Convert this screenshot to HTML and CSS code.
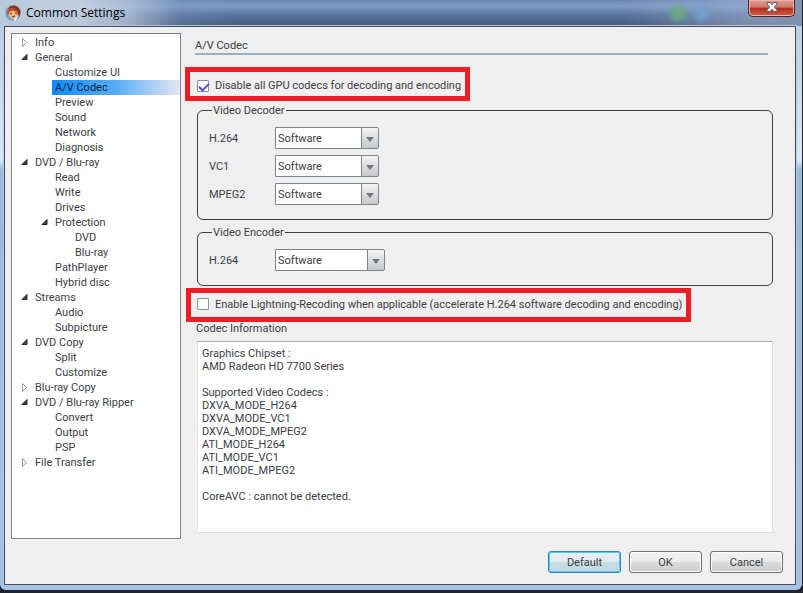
FILE: index.html
```html
<!DOCTYPE html>
<html lang="en">
<head>
<meta charset="utf-8">
<title>Common Settings</title>
<link rel="stylesheet" href="styles.css">
</head>
<body>
<svg class="defs" aria-hidden="true">
  <symbol id="open" viewBox="0 0 9 9"><path d="M7 1.500V6.500H2Z" fill="#444" stroke="#222"/></symbol>
  <symbol id="closed" viewBox="0 0 9 9"><path d="M2.500 .5V8.500L6.500 4.500Z" fill="#fff" stroke="#999"/></symbol>
</svg>
<div class="window">
  <header class="titlebar">
    <svg class="logo" viewBox="0 0 16 16" aria-hidden="true">
      <circle cx="8" cy="8" r="7.8" fill="#6f9fcb"/>
      <path d="M3 4Q5 0 10 .5Q15 2 15.500 7Q15 12 12 14Q13 8 10 5Z" fill="#8f301c"/>
      <path d="M4 5Q8 2 12 6L13 10Q11 15 7 14L3 10Z" fill="#efb583"/>
      <path d="M2 8Q2 3 7 3Q11 3 12 7L9 6Q5 5 4 8L3 11Z" fill="#b5562b"/>
      <path d="M5 8L7 9M10 8H12M7 12L10 11" stroke="#63301f" fill="none"/>
      <path d="M9 14L14 10Q13 14 9 16Z" fill="#edf3f8"/>
    </svg>
    <h1>Common Settings</h1>
    <span class="glow green"></span><span class="glow blue"></span>
    <button class="close" type="button" aria-label="Close">
      <svg viewBox="0 0 12 10" aria-hidden="true"><path d="M1 .5H4.200L6 2.700 7.800.5H11V2L8.500 5 11 8V9.500H7.800L6 7.300 4.200 9.500H1V8L3.500 5 1 2Z" fill="#f5f5f5" stroke="#55566b"/></svg>
    </button>
  </header>
  <div class="client">
    <nav class="tree" aria-label="Settings">
      <ul>
        <li><a href="#"><svg><use href="#closed"/></svg>Info</a></li>
        <li><a href="#"><svg><use href="#open"/></svg>General</a>
          <ul>
            <li><a href="#">Customize UI</a></li>
            <li><a href="#" class="selected" aria-current="page">A/V Codec</a></li>
            <li><a href="#">Preview</a></li>
            <li><a href="#">Sound</a></li>
            <li><a href="#">Network</a></li>
            <li><a href="#">Diagnosis</a></li>
          </ul></li>
        <li><a href="#"><svg><use href="#open"/></svg>DVD / Blu-ray</a>
          <ul>
            <li><a href="#">Read</a></li>
            <li><a href="#">Write</a></li>
            <li><a href="#">Drives</a></li>
            <li><a href="#"><svg><use href="#open"/></svg>Protection</a>
              <ul>
                <li><a href="#">DVD</a></li>
                <li><a href="#">Blu-ray</a></li>
              </ul></li>
            <li><a href="#">PathPlayer</a></li>
            <li><a href="#">Hybrid disc</a></li>
          </ul></li>
        <li><a href="#"><svg><use href="#open"/></svg>Streams</a>
          <ul>
            <li><a href="#">Audio</a></li>
            <li><a href="#">Subpicture</a></li>
          </ul></li>
        <li><a href="#"><svg><use href="#open"/></svg>DVD Copy</a>
          <ul>
            <li><a href="#">Split</a></li>
            <li><a href="#">Customize</a></li>
          </ul></li>
        <li><a href="#"><svg><use href="#closed"/></svg>Blu-ray Copy</a></li>
        <li><a href="#"><svg><use href="#open"/></svg>DVD / Blu-ray Ripper</a>
          <ul>
            <li><a href="#">Convert</a></li>
            <li><a href="#">Output</a></li>
            <li><a href="#">PSP</a></li>
          </ul></li>
        <li><a href="#"><svg><use href="#closed"/></svg>File Transfer</a></li>
      </ul>
    </nav>
    <main class="panel">
      <h2>A/V Codec</h2>
      <label class="check first"><input type="checkbox" checked>Disable all GPU codecs for decoding and encoding</label>
      <fieldset class="decoder">
        <legend>Video Decoder</legend>
        <div class="row"><label for="d1">H.264</label><span class="combo"><select id="d1"><option>Software</option></select></span></div>
        <div class="row"><label for="d2">VC1</label><span class="combo"><select id="d2"><option>Software</option></select></span></div>
        <div class="row"><label for="d3">MPEG2</label><span class="combo"><select id="d3"><option>Software</option></select></span></div>
      </fieldset>
      <fieldset class="encoder">
        <legend>Video Encoder</legend>
        <div class="row"><label for="e1">H.264</label><span class="combo wide"><select id="e1"><option>Software</option></select></span></div>
      </fieldset>
      <label class="check second"><input type="checkbox">Enable Lightning-Recoding when applicable (accelerate H.264 software decoding and encoding)</label>
      <label class="caption" for="info">Codec Information</label>
      <textarea id="info" readonly>Graphics Chipset :
AMD Radeon HD 7700 Series

Supported Video Codecs :
DXVA_MODE_H264
DXVA_MODE_VC1
DXVA_MODE_MPEG2
ATI_MODE_H264
ATI_MODE_VC1
ATI_MODE_MPEG2

CoreAVC : cannot be detected.</textarea>
      <div class="actions">
        <button type="button" class="default">Default</button>
        <button type="button">OK</button>
        <button type="button">Cancel</button>
      </div>
    </main>
  </div>
</div>
</body>
</html>
```
FILE: styles.css
```css
* { box-sizing: border-box; }
html { height: 100%; background: #20242f; }
body {
  margin: 0;
  height: 100%;
  padding-bottom: 3px;
  color: #3c3c46;
  font: 11px/15px Roboto, "Liberation Sans", sans-serif;
}
.defs { position: absolute; width: 0; height: 0; }
.window {
  display: flex;
  flex-direction: column;
  height: 100%;
  margin-right: 1px;
  padding: 0 6px 5px 4px;
  border-radius: 0 6px 6px 6px;
  background:
    linear-gradient(180deg, #b6c8dc, #d9e9f7 160px, #9bb9dc 170px, #a5c2e2);
}
.titlebar {
  display: flex;
  flex: none;
  align-items: center;
  height: 26px;
  margin: 0 -6px 0 -4px;
  padding: 0 7px 0 5px;
  background:
    linear-gradient(90deg, #b9c8dc 0, #ccd7e5dd 80px, #b9c8dcbb 130px, #7d9ac544 180px, #7d9ac500 240px, #7d9ac500 620px, #a3b4d088 750px, #8292ad),
    linear-gradient(180deg, #6c89b6, #7d9ac5 25%, #5a75a1 55%, #445879);
}
.logo { width: 16px; height: 16px; margin-right: 5px; }
h1 {
  margin: 0 auto 0 0;
  color: #000;
  font: 12px/16px "Open Sans", "Segoe UI", sans-serif;
}
.glow { width: 16px; height: 16px; margin-right: 8px; border-radius: 50%; filter: blur(3px); }
.green { background: #6dab80; }
.blue { margin-right: 38px; background: #719fcc; }
.close {
  display: grid;
  align-self: flex-start;
  place-items: center;
  width: 47px;
  height: 17px;
  padding: 0 0 2px;
  border: 1px solid #4d2228;
  border-top: 0;
  border-radius: 0 0 5px 5px;
  background: linear-gradient(#dc9c92, #cf776a 45%, #b02e1a 50%, #cf6048);
  box-shadow: inset 0 0 0 1px #e9b6ad;
}
.close svg { width: 12px; height: 10px; }
.client {
  display: flex;
  flex: 1;
  gap: 14px;
  min-height: 0;
  padding: 6px 12px 11px 6px;
  border: 1px solid #3e4a60;
  background: #efefef;
  box-shadow: 0 0 0 1px #b9cadf;
}
.tree {
  flex: none;
  width: 170px;
  margin-bottom: 34px;
  border: 1px solid #82828f;
  background: #fff;
}
.tree ul { margin: 0; padding: 0 0 0 20px; list-style: none; }
.tree > ul { padding: 1px 0 0; }
.tree a { display: flex; align-items: center; height: 15px; padding-left: 3px; color: inherit; text-decoration: none; }
.tree > ul > li > a { padding-left: 23px; }
.tree > ul > li > ul { padding-left: 40px; }
.tree svg { width: 9px; height: 9px; margin: 0 6px 0 -15px; }
.tree .selected { background: linear-gradient(90deg, #0a8cff, #58adf7 50%, #e5e7f0); color: #14202f; }
.panel { display: flex; flex: 1; flex-direction: column; min-width: 0; }
h2 {
  margin: 5px 15px 0 0;
  border-bottom: 2px solid #9aafc5;
  font-size: 11px;
  font-weight: 400;
  line-height: 15px;
}
.check {
  display: flex;
  align-items: center;
  align-self: flex-start;
  height: 34px;
  border: 5px solid #ee1c25;
  white-space: nowrap;
}
.first { margin: 12px 0 0 -10px; padding: 3px 4px 0 7px; }
.second { margin: 2px 0 0 -9px; padding: 0 4px 2px 6px; }
.check input {
  appearance: none;
  width: 12px;
  height: 12px;
  margin: 0 6px 0 0;
  border: 1px solid #7b94ac;
  border-radius: 1px;
  background: #fff;
}
.check input:checked::before {
  content: "";
  display: block;
  width: 8px;
  height: 4px;
  margin: 2px 1px;
  border: solid #5850cc;
  border-width: 0 0 2px 2px;
  transform: rotate(-45deg);
}
fieldset {
  display: flex;
  flex-direction: column;
  gap: 6px;
  min-width: 0;
  margin: 1px 10px 0 2px;
  padding: 9px 11px 14px;
  border: 1px solid #3e3e48;
  border-radius: 6px;
}
.encoder { margin-top: 4px; }
legend { margin-left: 3px; padding: 2px 1px 0; line-height: 14px; }
.row { display: flex; align-items: center; }
.row label { width: 66px; }
.combo { position: relative; width: 104px; height: 22px; }
.wide { width: 110px; }
.combo select {
  appearance: none;
  width: 100%;
  height: 22px;
  padding: 0 18px 0 2px;
  border: 1px solid #7d838f;
  border-radius: 0 2px 2px 0;
  background: linear-gradient(#f4f4f4, #c5c7ca) right / 16px 100% no-repeat, linear-gradient(#7d838f, #7d838f) right / 17px 100% no-repeat, #fff;
  color: inherit;
  font: inherit;
}
.combo::after {
  content: "";
  position: absolute;
  top: 10px;
  right: 5px;
  border: solid transparent;
  border-width: 5px 4px 0;
  border-top-color: #70747d;
  pointer-events: none;
}
.caption { margin-left: 1px; line-height: 14px; }
textarea {
  flex: 1;
  min-height: 0;
  margin: 5px 10px 0 2px;
  padding: 5px 4px;
  border: 1px solid #dfe1ea;
  border-top-color: #a8aab2;
  outline: 0;
  background: #fff;
  color: inherit;
  font: inherit;
  line-height: 13px;
  resize: none;
}
.actions { display: flex; justify-content: flex-end; gap: 8px; margin-top: 18px; }
.actions button {
  width: 73px;
  height: 22px;
  padding: 0;
  border: 1px solid #707070;
  border-radius: 3px;
  background: linear-gradient(#f3f3f3, #ebebeb 48%, #dadada 50%, #cecece);
  box-shadow: inset 0 0 0 1px #fbfbfb;
  color: inherit;
  font: inherit;
}
.actions .default {
  border-color: #3c7fb1;
  background: linear-gradient(#eaf1f4, #dfeaf0 48%, #c9dbe4 50%, #c6d8e1);
  box-shadow: inset 0 0 0 1px #46cff5;
}
```
